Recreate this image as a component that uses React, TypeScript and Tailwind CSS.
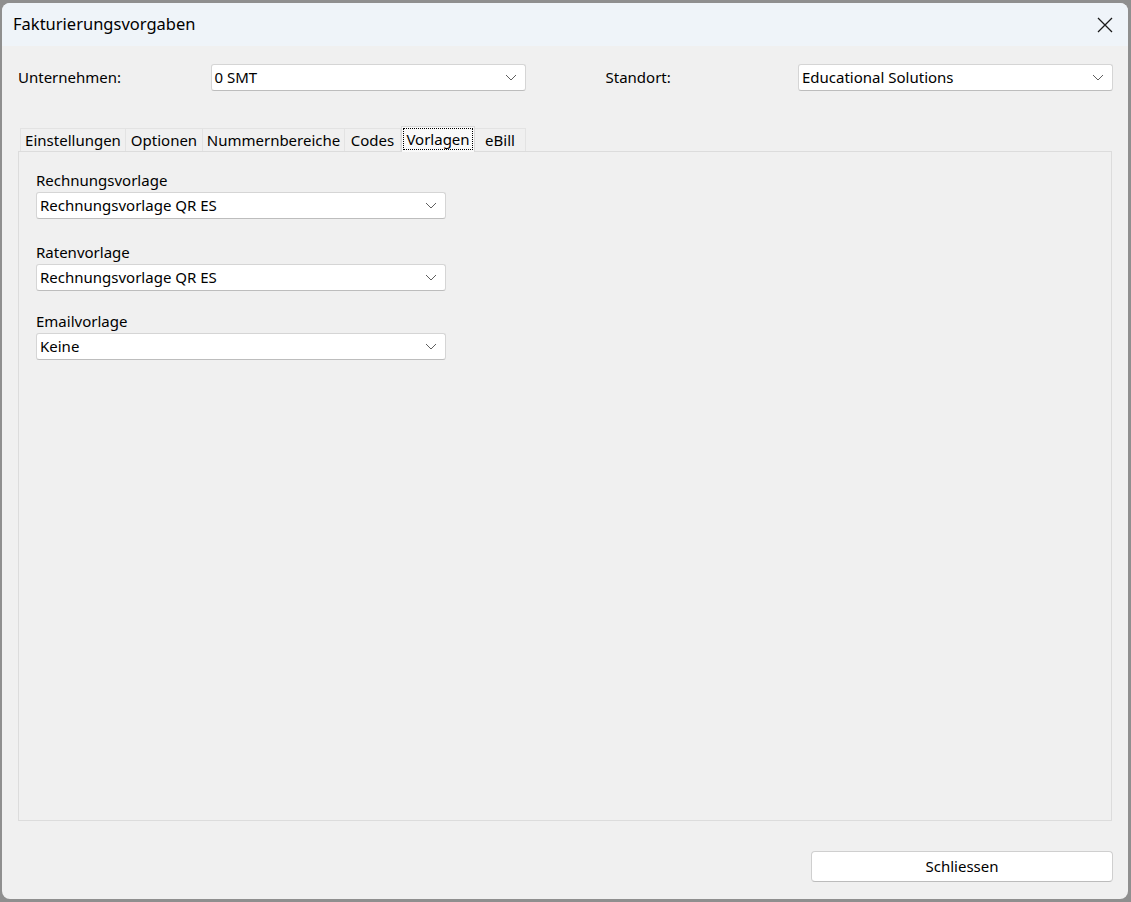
import React from "react";

const font = { fontFamily: '"Noto Sans", "Segoe UI", sans-serif' };

function Chevron() {
  return (
    <svg width="12" height="7" viewBox="0 0 12 7" className="shrink-0">
      <polyline points="1,1 6,6 11,1" fill="none" stroke="#5f5f5f" strokeWidth="1" />
    </svg>
  );
}

function Combo({ value, width }: { value: string; width: string }) {
  return (
    <div
      className={`flex h-[27px] ${width} shrink-0 items-center justify-between rounded-[3px] border border-[#d5d5d5] border-b-[#bdbdbd] bg-white pl-[3px] pr-[8px] text-[15px] text-black`}
    >
      <span className="leading-none">{value}</span>
      <Chevron />
    </div>
  );
}

const tabs = [
  { name: "Einstellungen", w: "w-[106px]" },
  { name: "Optionen", w: "w-[77px]" },
  { name: "Nummernbereiche", w: "w-[142px]" },
  { name: "Codes", w: "w-[56px]" },
  { name: "Vorlagen", w: "w-[74px]" },
  { name: "eBill", w: "w-[51px]" },
];

function Tabs() {
  return (
    <div className="ml-[2px] flex h-[25px] items-end">
      {tabs.map((t) => {
        const active = t.name === "Vorlagen";
        return active ? (
          <div
            key={t.name}
            className={`relative z-10 -mb-px flex h-[26px] ${t.w} items-center justify-center border border-b-0 border-[#d9d9d9] bg-[#f9f9f9] pb-[2px] text-[15px] text-black`}
          >
            <span className="border border-dotted border-black px-[2px] leading-[20px]">{t.name}</span>
          </div>
        ) : (
          <div
            key={t.name}
            className={`flex h-[23px] ${t.w} items-center justify-center border border-b-0 border-l-0 border-[#e3e3e3] first:border-l bg-[#f0f0f0] text-[15px] text-black`}
          >
            {t.name}
          </div>
        );
      })}
    </div>
  );
}

function Field({ label, value, gap }: { label: string; value: string; gap: string }) {
  return (
    <div className={`flex flex-col ${gap}`}>
      <div className="h-[24px] text-[15px] leading-[24px] text-black">{label}</div>
      <Combo value={value} width="w-[410px]" />
    </div>
  );
}

export default function App() {
  return (
    <div className="h-[902px] w-[1131px] bg-[#8f8f8f] pb-[3px] pl-[2px] pr-[3px] pt-[3px]" style={font}>
      <div className="flex h-full flex-col overflow-hidden rounded-[8px] bg-[#f0f0f0]">
        {/* title bar */}
        <div className="flex h-[43px] shrink-0 items-center justify-between bg-[#eff4f9] pl-[11px] pr-[14px]">
          <span className="text-[16.5px] text-black">Fakturierungsvorgaben</span>
          <svg width="18" height="18" viewBox="0 0 18 18">
            <path d="M2 2 L16 16 M16 2 L2 16" stroke="#1a1a1a" strokeWidth="1.3" />
          </svg>
        </div>

        <div className="flex flex-1 flex-col pb-[17px] pl-[16px] pr-[15px]">
          {/* header row */}
          <div className="mt-[18px] flex items-center text-[15px] text-black">
            <div className="w-[194px]">Unternehmen:</div>
            <Combo value="0 SMT" width="w-[315px]" />
            <div className="ml-[80px] w-[194px]">Standort:</div>
            <Combo value="Educational Solutions" width="w-[315px]" />
          </div>

          {/* tabs + panel */}
          <div className="mt-[35px] flex flex-col">
            <Tabs />
            <div className="flex h-[670px] w-[1094px] flex-col border border-[#dcdcdc] bg-[#f0f0f0] pl-[17px] pt-[16px]">
              <Field label="Rechnungsvorlage" value="Rechnungsvorlage QR ES" gap="" />
              <Field label="Ratenvorlage" value="Rechnungsvorlage QR ES" gap="mt-[21px]" />
              <Field label="Emailvorlage" value="Keine" gap="mt-[18px]" />
            </div>
          </div>

          <div className="mt-auto flex justify-end">
            <div className="flex h-[31px] w-[302px] items-center justify-center rounded-[4px] border border-[#cfcfcf] border-b-[#bcbcbc] bg-white text-[15px] text-black">
              Schliessen
            </div>
          </div>
        </div>
      </div>
    </div>
  );
}
